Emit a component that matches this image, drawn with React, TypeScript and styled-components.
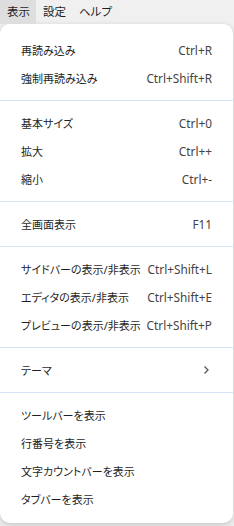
import React from "react";
import styled, { createGlobalStyle } from "styled-components";

const GlobalStyle = createGlobalStyle`
  html, body {
    margin: 0;
    padding: 0;
    background: #f0f0f0;
  }
  body {
    font-family: "Noto Sans", "Noto Sans CJK JP", sans-serif;
    font-feature-settings: "palt";
    color: #1f1f1f;
  }
`;

const Page = styled.div`
  width: 234px;
  height: 526px;
  overflow: hidden;
  background: #f0f0f0;
`;

const MenuBar = styled.div`
  display: flex;
  height: 24px;
  align-items: stretch;
`;

const BarItem = styled.div<{ $active?: boolean }>`
  display: flex;
  align-items: center;
  padding: 0 6px 2px 7px;
  font-size: 11.5px;
  background: ${(p) => (p.$active ? "#dedede" : "transparent")};
`;

const Menu = styled.div`
  width: 233px;
  box-sizing: border-box;
  background: #ffffff;
  border-radius: 10px;
  box-shadow: 0 2px 6px rgba(0, 0, 0, 0.18);
  padding: 12px 0 10px;
`;

const Item = styled.div`
  display: flex;
  align-items: center;
  justify-content: space-between;
  gap: 4px;
  height: 28px;
  padding: 0 21px 0 21px;
  white-space: nowrap;
`;

const Label = styled.span`
  color: #1f1f1f;
  font-size: 11px;
`;

const Shortcut = styled.span`
  color: #444;
  font-size: 11.8px;
  font-feature-settings: normal;
`;

const Separator = styled.div`
  height: 1px;
  margin: 8px 0 8px;
  background: #d5e3f6;
`;

const Chevron = () => (
  <svg width="8" height="10" viewBox="0 0 8 10" style={{ marginRight: 2 }}>
    <path d="M2.5 1.5 L6 5 L2.5 8.5" fill="none" stroke="#555" strokeWidth="1.3" />
  </svg>
);

type Entry = { label: string; shortcut?: string; submenu?: boolean } | "sep";

const entries: Entry[] = [
  { label: "再読み込み", shortcut: "Ctrl+R" },
  { label: "強制再読み込み", shortcut: "Ctrl+Shift+R" },
  "sep",
  { label: "基本サイズ", shortcut: "Ctrl+0" },
  { label: "拡大", shortcut: "Ctrl++" },
  { label: "縮小", shortcut: "Ctrl+-" },
  "sep",
  { label: "全画面表示", shortcut: "F11" },
  "sep",
  { label: "サイドバーの表示/非表示", shortcut: "Ctrl+Shift+L" },
  { label: "エディタの表示/非表示", shortcut: "Ctrl+Shift+E" },
  { label: "プレビューの表示/非表示", shortcut: "Ctrl+Shift+P" },
  "sep",
  { label: "テーマ", submenu: true },
  "sep",
  { label: "ツールバーを表示" },
  { label: "行番号を表示" },
  { label: "文字カウントバーを表示" },
  { label: "タブバーを表示" },
];

const App = () => {
  return (
    <Page>
      <GlobalStyle />
      <MenuBar>
        <BarItem $active>表示</BarItem>
        <BarItem>設定</BarItem>
        <BarItem>ヘルプ</BarItem>
      </MenuBar>
      <Menu>
        {entries.map((e, idx) =>
          e === "sep" ? (
            <Separator key={idx} />
          ) : (
            <Item key={idx}>
              <Label>{e.label}</Label>
              {e.shortcut && <Shortcut>{e.shortcut}</Shortcut>}
              {e.submenu && <Chevron />}
            </Item>
          )
        )}
      </Menu>
    </Page>
  );
};

export default App;
